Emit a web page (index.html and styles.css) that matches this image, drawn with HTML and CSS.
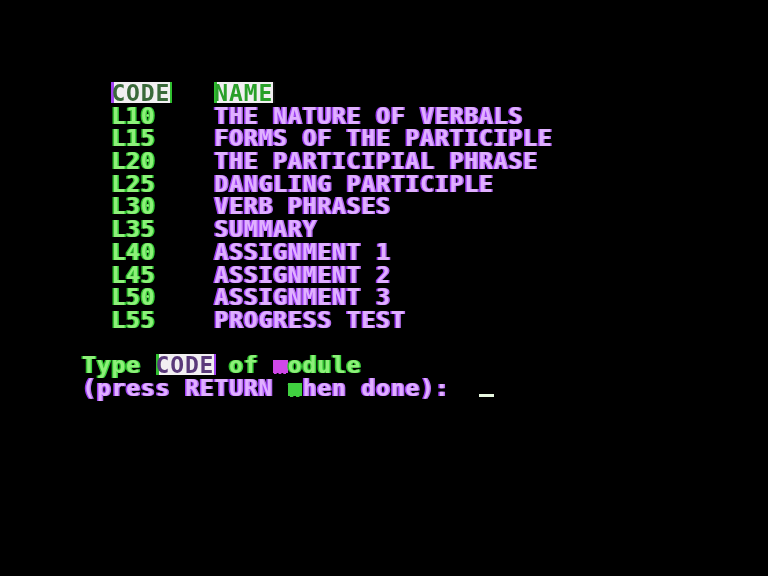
FILE: index.html
```html
<!DOCTYPE html>
<html>
<head>
<meta charset="utf-8">
<link rel="stylesheet" href="styles.css">
</head>
<body>
<div class="screen">
  <div class="row">  <span class="inv inv-p">CODE</span>   <span class="inv inv-g">NAME</span></div>
  <div class="row">  <span class="code">L10</span>    <span class="name">THE NATURE OF VERBALS</span></div>
  <div class="row">  <span class="code">L15</span>    <span class="name">FORMS OF THE PARTICIPLE</span></div>
  <div class="row">  <span class="code">L20</span>    <span class="name">THE PARTICIPIAL PHRASE</span></div>
  <div class="row">  <span class="code">L25</span>    <span class="name">DANGLING PARTICIPLE</span></div>
  <div class="row">  <span class="code">L30</span>    <span class="name">VERB PHRASES</span></div>
  <div class="row">  <span class="code">L35</span>    <span class="name">SUMMARY</span></div>
  <div class="row">  <span class="code">L40</span>    <span class="name">ASSIGNMENT 1</span></div>
  <div class="row">  <span class="code">L45</span>    <span class="name">ASSIGNMENT 2</span></div>
  <div class="row">  <span class="code">L50</span>    <span class="name">ASSIGNMENT 3</span></div>
  <div class="row">  <span class="code">L55</span>    <span class="name">PROGRESS TEST</span></div>
  <div class="row"> </div>
  <div class="row"><span class="code">Type </span><span class="inv inv-g2">CODE</span><span class="code"> of </span><span class="blk-m">m</span><span class="code">odule</span></div>
  <div class="row"><span class="name">(press RETURN </span><span class="blk-g">w</span><span class="name">hen done):  </span><span class="cursor"> </span></div>
</div>
</body>
</html>
```
FILE: styles.css
```css
html, body {
  margin: 0;
  padding: 0;
  background: #000;
}
body {
  width: 768px;
  height: 576px;
  overflow: hidden;
}
.screen {
  padding: 82px 0 0 82px;
  font-family: "DejaVu Sans Mono", "Liberation Mono", monospace;
  font-weight: bold;
  font-size: 23px;
  letter-spacing: 0.85px;
  color: #eee;
  filter: blur(0.5px);
}
.row {
  white-space: pre;
  height: 22.7px;
  line-height: 23.5px;
}
.code {
  color: #8ef07a;
  text-shadow: -1.5px 0 #2fbf2f, 1.5px 0 #3ad23a;
}
.name {
  color: #e0b0ff;
  text-shadow: -1.5px 0 #9b3cf5, 1.5px 0 #b86cf0;
}
.inv {
  display: inline-block;
  height: 21px;
  line-height: 22px;
  vertical-align: top;
  background: #f2f0f2;
  color: #2a2a2a;
}
.inv-p {
  box-shadow: inset 3px 0 #a040f0, 2px 0 #2fbf2f;
  color: #3a6a3a;
}
.inv-g {
  box-shadow: inset 3px 0 #30c030, 2px 0 #101010;
  color: #2aa02a;
}
.inv-g2 {
  box-shadow: inset 3px 0 #30c030, 2px 0 #a040f0;
  color: #5a3a7a;
}
.blk-m {
  display: inline-block;
  height: 13px;
  vertical-align: -1px;
  line-height: 13px;
  background: #d048e8;
  color: #d048e8;
  text-shadow: none;
}
.blk-g {
  display: inline-block;
  height: 13px;
  vertical-align: -1px;
  line-height: 13px;
  background: #40d040;
  color: #40d040;
}
.cursor {
  display: inline-block;
  width: 14.7px;
  height: 22.7px;
  vertical-align: top;
  background: linear-gradient(#000 0 17px, #e8f8e0 17px 20px, #000 20px);
}
```
